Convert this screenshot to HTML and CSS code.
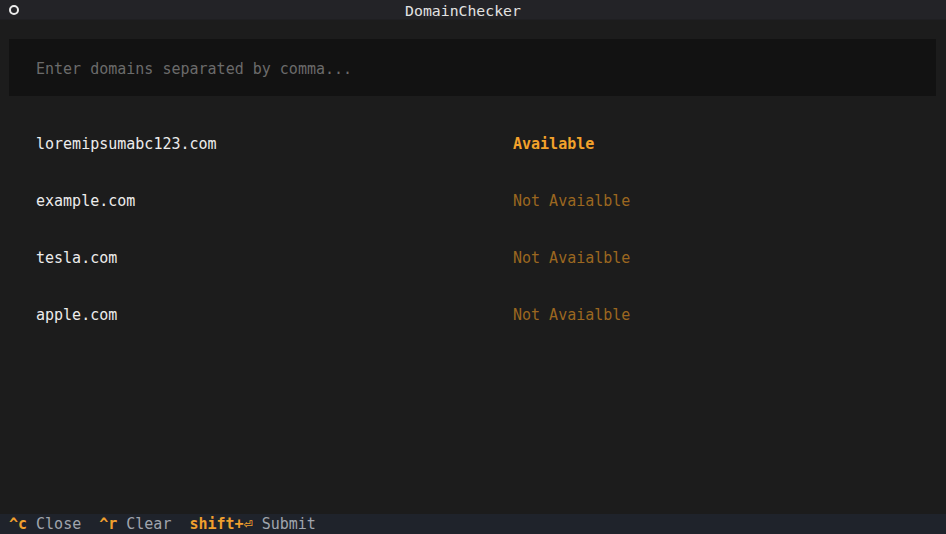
FILE: index.html
```html
<!DOCTYPE html>
<html>
<head>
<meta charset="utf-8">
<link rel="stylesheet" href="styles.css">
</head>
<body>
<div class="app">
  <div class="titlebar">
    <span class="ring"></span>
    <span class="title">DomainChecker</span>
  </div>
  <div class="main">
    <div class="input">Enter domains separated by comma...</div>
    <div class="results">
      <div class="domain">loremipsumabc123.com</div><div class="status ok">Available</div>
      <div class="domain">example.com</div><div class="status no">Not Avaialble</div>
      <div class="domain">tesla.com</div><div class="status no">Not Avaialble</div>
      <div class="domain">apple.com</div><div class="status no">Not Avaialble</div>
    </div>
  </div>
  <div class="footer">
    <div class="hint"><span class="key">^c</span><span class="lbl">Close</span></div>
    <div class="hint"><span class="key">^r</span><span class="lbl">Clear</span></div>
    <div class="hint"><span class="key">shift+⏎</span><span class="lbl">Submit</span></div>
  </div>
</div>
</body>
</html>
```
FILE: styles.css
```css
html, body {
  margin: 0;
  padding: 0;
  background: #1c1c1c;
}
.app {
  width: 946px;
  height: 534px;
  display: flex;
  flex-direction: column;
  font-family: "DejaVu Sans Mono", "Liberation Mono", monospace;
  font-size: 15px;
  color: #e4e4e4;
  background: #1c1c1c;
  overflow: hidden;
}
.titlebar {
  height: 20px;
  flex: none;
  background: #232327;
  border-bottom: 1px solid #1f1f22;
  box-sizing: border-box;
  display: flex;
  align-items: center;
  justify-content: center;
  padding-right: 20px;
  position: relative;
}
.ring {
  position: absolute;
  left: 9px;
  top: 5px;
  width: 6px;
  height: 6px;
  border: 2px solid #ececec;
  border-radius: 50%;
}
.title {
  color: #e2e2e2;
  font-size: 14.8px;
  line-height: 20px;
  position: relative;
  top: 1px;
}
.main {
  flex: 1;
  min-height: 0;
  padding: 19px 10px 0 9px;
}
.input {
  height: 57px;
  background: #121212;
  box-sizing: border-box;
  padding-left: 27px;
  padding-top: 2px;
  line-height: 57px;
  color: #6b6b6b;
}
.results {
  display: grid;
  grid-template-columns: 477px 1fr;
  row-gap: 39px;
  padding: 39px 0 0 27px;
  line-height: 18px;
}
.domain {
  color: #ececec;
  font-weight: 500;
}
.status.ok {
  color: #f3a22b;
  font-weight: bold;
}
.status.no {
  color: #9b6720;
}
.footer {
  height: 20px;
  flex: none;
  background: #1f232b;
  padding-left: 9px;
  line-height: 20px;
  display: flex;
  gap: 18px;
  white-space: pre;
}
.hint {
  display: flex;
  gap: 9px;
}
.key {
  color: #f0a02e;
  font-weight: bold;
}
.lbl {
  color: #a0a5ad;
}
```
